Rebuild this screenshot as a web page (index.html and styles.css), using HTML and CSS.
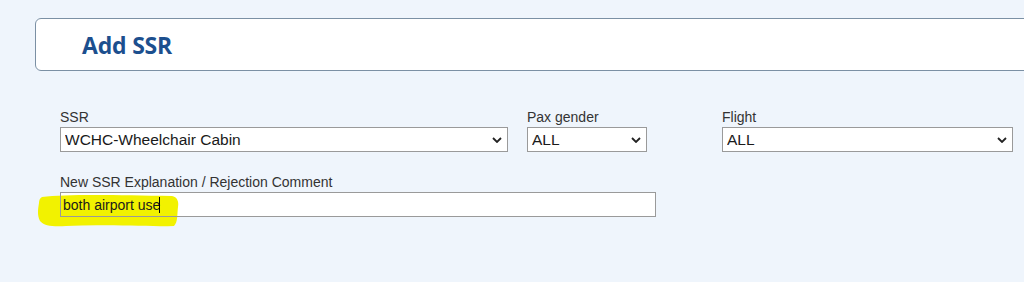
FILE: index.html
```html
<!DOCTYPE html>
<html lang="en">
<head>
    <meta charset="UTF-8">
    <title>Add SSR</title>
    <link rel="stylesheet" href="styles.css">
</head>
<body>

<div class="page">
    <div class="header">
        <h1>Add SSR</h1>
    </div>

    <div class="form">
        <div class="row">
            <div class="field field-ssr">
                <label for="ssr">SSR</label>
                <div class="select-wrap">
                    <select id="ssr">
                        <option>WCHC-Wheelchair Cabin</option>
                    </select>
                    <svg class="chevron" width="10" height="6" viewBox="0 0 10 6"><path d="M1 1l4 4 4-4" fill="none" stroke="#222" stroke-width="1.8"/></svg>
                </div>
            </div>
            <div class="field field-gender">
                <label for="gender">Pax gender</label>
                <div class="select-wrap">
                    <select id="gender">
                        <option>ALL</option>
                    </select>
                    <svg class="chevron" width="10" height="6" viewBox="0 0 10 6"><path d="M1 1l4 4 4-4" fill="none" stroke="#222" stroke-width="1.8"/></svg>
                </div>
            </div>
            <div class="field field-flight">
                <label for="flight">Flight</label>
                <div class="select-wrap">
                    <select id="flight">
                        <option>ALL</option>
                    </select>
                    <svg class="chevron" width="10" height="6" viewBox="0 0 10 6"><path d="M1 1l4 4 4-4" fill="none" stroke="#222" stroke-width="1.8"/></svg>
                </div>
            </div>
        </div>

        <div class="row">
            <div class="field field-comment">
                <label for="comment">New SSR Explanation / Rejection Comment</label>
                <div class="input-wrap">
                    <input type="text" id="comment" value="both airport use">
                    <span class="caret"></span>
                    <svg class="marker" width="146" height="36" viewBox="0 0 146 36"><path d="M6 4 C30 1 80 2 136 3 C141 4 143 8 142 14 C141 22 142 29 138 33 C110 34 70 31 30 33 C18 34 8 33 4 28 C1 22 2 16 3 10 C3 7 4 5 6 4 Z" fill="#f2f200"/></svg>
                </div>
            </div>
        </div>
    </div>
</div>

</body>
</html>
```

FILE: styles.css
```css
* {
    box-sizing: border-box;
    margin: 0;
    padding: 0;
}
body {
    font-family: Arial, 'Liberation Sans', sans-serif;
    background: #eff5fc;
    overflow: hidden;
}
.page {
    padding: 18px 0 0 35px;
}
.header {
    height: 53px;
    margin-right: -20px;
    background: #fff;
    border: 1px solid #7b90a4;
    border-radius: 6px;
    display: flex;
    align-items: center;
    padding-left: 46px;
}
.header h1 {
    font-family: 'Open Sans', sans-serif;
    font-size: 23px;
    font-weight: 700;
    color: #1c4f8e;
    letter-spacing: -0.2px;
}
.form {
    padding: 38px 0 0 25px;
}
.row {
    display: flex;
    margin-bottom: 22px;
}
.field {
    display: flex;
    flex-direction: column;
}
.field label {
    font-size: 14px;
    color: #333;
    line-height: 16px;
    margin-bottom: 2px;
}
.field-ssr {
    width: 448px;
    margin-right: 19px;
}
.field-gender {
    width: 120px;
    margin-right: 75px;
}
.field-flight {
    width: 291px;
}
.field-comment {
    width: 596px;
}
.select-wrap, .input-wrap {
    position: relative;
}
select, input {
    appearance: none;
    width: 100%;
    height: 25px;
    border: 1px solid #9a9a9a;
    background: #fff;
    font-family: Arial, 'Liberation Sans', sans-serif;
    color: #1a1a1a;
    outline: none;
}
select {
    font-size: 15.5px;
    padding: 0 0 0 4px;
}
input {
    position: relative;
    z-index: 2;
    background: transparent;
    font-size: 14px;
    padding: 0 0 0 2px;
}
.input-wrap {
    background: #fff;
}
.chevron {
    position: absolute;
    right: 6px;
    top: 10px;
    pointer-events: none;
}
.caret {
    position: absolute;
    z-index: 3;
    left: 99px;
    top: 5px;
    width: 1px;
    height: 16px;
    background: #000;
}
.marker {
    position: absolute;
    z-index: 1;
    left: -24px;
    top: 1px;
}
```
